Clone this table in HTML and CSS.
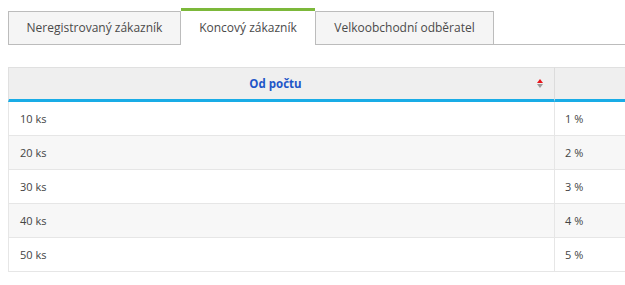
FILE: index.html
```html
<!DOCTYPE html>
<html lang="cs">
<head>
<meta charset="utf-8">
<title>Ceny</title>
<link rel="stylesheet" href="styles.css">
</head>
<body>
<div class="page">
  <div class="tabs">
    <div class="tab tab-first">Neregistrovaný zákazník</div>
    <div class="tab tab-active">Koncový zákazník</div>
    <div class="tab tab-third">Velkoobchodní odběratel</div>
  </div>
  <div class="table-wrap">
    <table class="grid">
      <thead>
        <tr>
          <th class="c1">Od počtu<span class="sort"><span class="up"></span><span class="down"></span></span></th>
          <th class="c2"></th>
        </tr>
      </thead>
      <tbody>
        <tr><td class="c1">10 ks</td><td class="c2">1 %</td></tr>
        <tr class="alt"><td class="c1">20 ks</td><td class="c2">2 %</td></tr>
        <tr><td class="c1">30 ks</td><td class="c2">3 %</td></tr>
        <tr class="alt"><td class="c1">40 ks</td><td class="c2">4 %</td></tr>
        <tr><td class="c1">50 ks</td><td class="c2">5 %</td></tr>
      </tbody>
    </table>
  </div>
</div>
</body>
</html>
```
FILE: styles.css
```css
html, body {
  margin: 0;
  padding: 0;
  background: #fff;
  overflow: hidden;
}
body {
  font-family: "Open Sans", "Liberation Sans", sans-serif;
  color: #444;
}
.page {
  padding: 8px 0 0 8px;
}
.tabs {
  display: flex;
  align-items: flex-end;
  border-bottom: 1px solid #bcbcbc;
  height: 36px;
}
.tab {
  box-sizing: border-box;
  height: 33px;
  font-size: 12px;
  line-height: 31px;
  text-align: center;
  color: #4a4a4a;
  background: #f5f5f5;
  border: 1px solid #bcbcbc;
  border-bottom: none;
}
.tab-first {
  width: 173px;
}
.tab-active {
  width: 134px;
  height: 37px;
  margin-bottom: -1px;
  background: #fff;
  border: none;
  border-top: 3px solid #7cb83a;
  line-height: 33px;
}
.tab-third {
  width: 179px;
}
.table-wrap {
  margin-top: 22px;
  overflow: hidden;
}
.grid {
  border-collapse: separate;
  border-spacing: 0;
  width: 720px;
  table-layout: fixed;
  font-size: 11px;
}
.grid th, .grid td {
  box-sizing: border-box;
  padding: 0;
}
.grid th {
  position: relative;
  height: 35px;
  background: #efefef;
  border-top: 1px solid #e0e0e0;
  border-bottom: 3px solid #19ace6;
  color: #1e56c8;
  font-weight: 700;
  font-size: 11.5px;
  text-align: center;
}
.grid th.c1 {
  width: 547px;
  padding-right: 12px;
  border-left: 1px solid #e0e0e0;
  border-right: 1px solid #dcdcdc;
}
.grid td {
  height: 34px;
  border-bottom: 1px solid #e6e6e6;
  padding-left: 11px;
}
.grid td.c1 {
  border-left: 1px solid #e6e6e6;
  border-right: 1px solid #e6e6e6;
}
.grid td.c2 {
  padding-left: 10px;
}
.grid tr.alt td {
  background: #f7f7f7;
}
.sort {
  position: absolute;
  right: 10px;
  top: 11px;
  width: 7px;
  height: 9px;
}
.sort .up, .sort .down {
  display: block;
  width: 0;
  height: 0;
  border-left: 3.5px solid transparent;
  border-right: 3.5px solid transparent;
}
.sort .up {
  border-bottom: 4px solid #e8141a;
}
.sort .down {
  margin-top: 1px;
  border-top: 4px solid #9a9a9a;
}
```
